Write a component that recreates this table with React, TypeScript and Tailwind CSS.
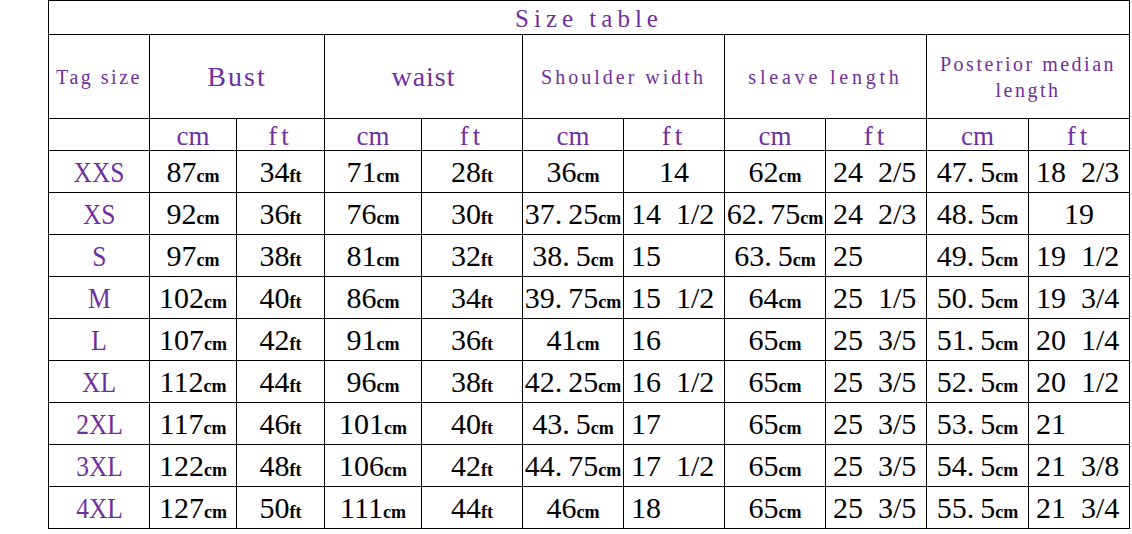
const purple = "text-[#7030a0]";

type Cell = { v: string; left?: boolean };

const rows: { size: string; cells: Cell[] }[] = [
  { size: "XXS", cells: [{ v: "87cm" }, { v: "34ft" }, { v: "71cm" }, { v: "28ft" }, { v: "36cm" }, { v: "14" }, { v: "62cm" }, { v: "24  2/5", left: true }, { v: "47.5cm" }, { v: "18  2/3", left: true }] },
  { size: "XS", cells: [{ v: "92cm" }, { v: "36ft" }, { v: "76cm" }, { v: "30ft" }, { v: "37.25cm" }, { v: "14  1/2", left: true }, { v: "62.75cm" }, { v: "24  2/3", left: true }, { v: "48.5cm" }, { v: "19" }] },
  { size: "S", cells: [{ v: "97cm" }, { v: "38ft" }, { v: "81cm" }, { v: "32ft" }, { v: "38.5cm" }, { v: "15", left: true }, { v: "63.5cm" }, { v: "25", left: true }, { v: "49.5cm" }, { v: "19  1/2", left: true }] },
  { size: "M", cells: [{ v: "102cm" }, { v: "40ft" }, { v: "86cm" }, { v: "34ft" }, { v: "39.75cm" }, { v: "15  1/2", left: true }, { v: "64cm" }, { v: "25  1/5", left: true }, { v: "50.5cm" }, { v: "19  3/4", left: true }] },
  { size: "L", cells: [{ v: "107cm" }, { v: "42ft" }, { v: "91cm" }, { v: "36ft" }, { v: "41cm" }, { v: "16", left: true }, { v: "65cm" }, { v: "25  3/5", left: true }, { v: "51.5cm" }, { v: "20  1/4", left: true }] },
  { size: "XL", cells: [{ v: "112cm" }, { v: "44ft" }, { v: "96cm" }, { v: "38ft" }, { v: "42.25cm" }, { v: "16  1/2", left: true }, { v: "65cm" }, { v: "25  3/5", left: true }, { v: "52.5cm" }, { v: "20  1/2", left: true }] },
  { size: "2XL", cells: [{ v: "117cm" }, { v: "46ft" }, { v: "101cm" }, { v: "40ft" }, { v: "43.5cm" }, { v: "17", left: true }, { v: "65cm" }, { v: "25  3/5", left: true }, { v: "53.5cm" }, { v: "21", left: true }] },
  { size: "3XL", cells: [{ v: "122cm" }, { v: "48ft" }, { v: "106cm" }, { v: "42ft" }, { v: "44.75cm" }, { v: "17  1/2", left: true }, { v: "65cm" }, { v: "25  3/5", left: true }, { v: "54.5cm" }, { v: "21  3/8", left: true }] },
  { size: "4XL", cells: [{ v: "127cm" }, { v: "50ft" }, { v: "111cm" }, { v: "44ft" }, { v: "46cm" }, { v: "18", left: true }, { v: "65cm" }, { v: "25  3/5", left: true }, { v: "55.5cm" }, { v: "21  3/4", left: true }] },
];

const widths = [101, 87, 88, 97, 101, 101, 101, 101, 101, 102, 101];

function Value({ v }: { v: string }) {
  const m = v.match(/^([\d.]+)(cm|ft)$/);
  const num = m ? m[1] : v;
  const unit = m ? m[2] : "";
  const parts = num.split(".");
  return (
    <span className="whitespace-pre">
      {parts[0]}
      {parts.length > 1 && (
        <>
          <span className="mr-[6px]">.</span>
          {parts[1]}
        </>
      )}
      {unit && <span className="text-[18px] leading-none font-bold">{unit}</span>}
    </span>
  );
}

export default function App() {
  const cell = "border border-black p-0";
  return (
    <div className="min-h-[534px] bg-white pl-[48px] font-['Liberation_Serif',serif]">
      <table className="table-fixed border-collapse border border-black w-[1081px]">
        <colgroup>
          {widths.map((w, i) => (
            <col key={i} style={{ width: w }} />
          ))}
        </colgroup>
        <tbody>
          <tr className="h-[34px]">
            <td colSpan={11} className={`${cell} text-center text-[25px] leading-[30px] tracking-[5px] pt-[2px] ${purple}`}>
              Size table
            </td>
          </tr>
          <tr className="h-[84px]">
            <td className={`${cell} text-center text-[20px] tracking-[2.5px] ${purple}`}>Tag size</td>
            <td colSpan={2} className={`${cell} text-center text-[28px] tracking-[2px] ${purple}`}>Bust</td>
            <td colSpan={2} className={`${cell} text-center text-[28px] tracking-[1px] ${purple}`}>waist</td>
            <td colSpan={2} className={`${cell} text-center text-[20px] tracking-[3px] ${purple}`}>Shoulder width</td>
            <td colSpan={2} className={`${cell} text-center text-[20px] tracking-[3.8px] ${purple}`}>sleave length</td>
            <td colSpan={2} className={`${cell} text-center text-[20px] leading-[26px] tracking-[2.5px] ${purple}`}>
              Posterior median
              <br />
              length
            </td>
          </tr>
          <tr className="h-[32px]">
            <td className={cell}></td>
            {Array.from({ length: 5 }).flatMap((_, i) => [
              <td key={`c${i}`} className={`${cell} text-center align-bottom text-[27px] leading-[28px] ${purple}`}>cm</td>,
              <td key={`f${i}`} className={`${cell} text-center align-bottom text-[27px] leading-[28px] tracking-[4px] ${purple}`}>ft</td>,
            ])}
          </tr>
          {rows.map((r) => (
            <tr key={r.size} className="h-[42px]">
              <td className={`${cell} text-center text-[30px] leading-[34px] ${purple}`}>
                <span className="inline-block scale-x-[0.85]">{r.size}</span>
              </td>
              {r.cells.map((c, i) => (
                <td
                  key={i}
                  className={`${cell} whitespace-nowrap text-[30px] leading-[34px] text-black ${
                    c.left ? "text-left pl-[7px]" : "text-center"
                  }`}
                >
                  <Value v={c.v} />
                </td>
              ))}
            </tr>
          ))}
        </tbody>
      </table>
    </div>
  );
}
